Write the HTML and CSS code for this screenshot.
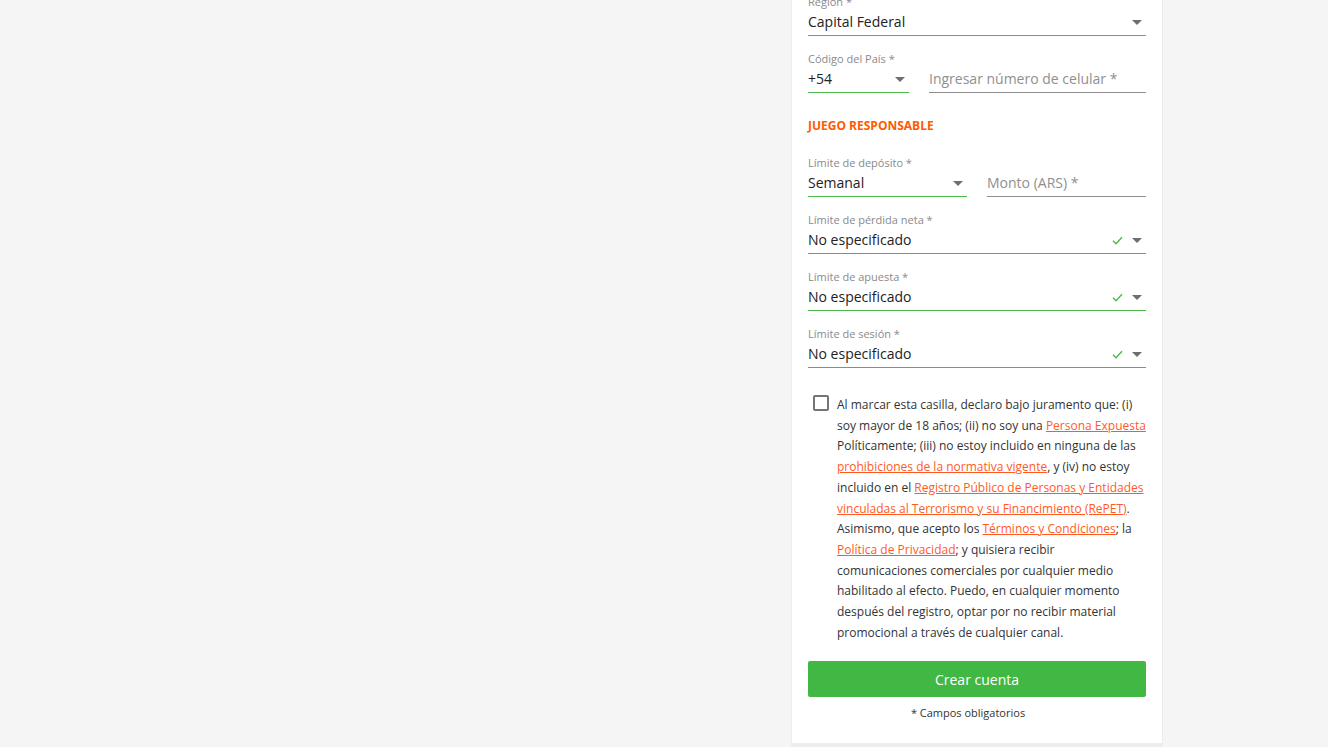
FILE: index.html
```html
<!DOCTYPE html>
<html lang="es">
<head>
<meta charset="utf-8">
<title>Registro</title>
<link rel="stylesheet" href="styles.css">
</head>
<body>
<div class="page">
  <div class="card">
    <div class="field">
      <div class="label">Región *</div>
      <div class="input filled">
        <span class="value">Capital Federal</span>
        <span class="icons"><svg class="arrow" width="10" height="5" viewBox="0 0 10 5"><path d="M0 0h10L5 5z"/></svg></span>
      </div>
    </div>

    <div class="row row-phone">
      <div class="field code">
        <div class="label">Código del País *</div>
        <div class="input filled">
          <span class="value">+54</span>
          <span class="icons"><svg class="arrow" width="10" height="5" viewBox="0 0 10 5"><path d="M0 0h10L5 5z"/></svg></span>
        </div>
      </div>
      <div class="field grow">
        <div class="label"></div>
        <div class="input empty">
          <span class="placeholder">Ingresar número de celular *</span>
        </div>
      </div>
    </div>

    <h3 class="section">JUEGO RESPONSABLE</h3>

    <div class="row row-half">
      <div class="field">
        <div class="label">Límite de depósito *</div>
        <div class="input filled">
          <span class="value">Semanal</span>
          <span class="icons"><svg class="arrow" width="10" height="5" viewBox="0 0 10 5"><path d="M0 0h10L5 5z"/></svg></span>
        </div>
      </div>
      <div class="field">
        <div class="label"></div>
        <div class="input empty">
          <span class="placeholder">Monto (ARS) *</span>
        </div>
      </div>
    </div>

    <div class="field">
      <div class="label">Límite de pérdida neta *</div>
      <div class="input filled">
        <span class="value">No especificado</span>
        <span class="icons"><svg class="check" width="11" height="9" viewBox="0 0 11 9"><path d="M1 4.8l3 3L10 1.2"/></svg><svg class="arrow" width="10" height="5" viewBox="0 0 10 5"><path d="M0 0h10L5 5z"/></svg></span>
      </div>
    </div>

    <div class="field">
      <div class="label">Límite de apuesta *</div>
      <div class="input filled">
        <span class="value">No especificado</span>
        <span class="icons"><svg class="check" width="11" height="9" viewBox="0 0 11 9"><path d="M1 4.8l3 3L10 1.2"/></svg><svg class="arrow" width="10" height="5" viewBox="0 0 10 5"><path d="M0 0h10L5 5z"/></svg></span>
      </div>
    </div>

    <div class="field">
      <div class="label">Límite de sesión *</div>
      <div class="input filled">
        <span class="value">No especificado</span>
        <span class="icons"><svg class="check" width="11" height="9" viewBox="0 0 11 9"><path d="M1 4.8l3 3L10 1.2"/></svg><svg class="arrow" width="10" height="5" viewBox="0 0 10 5"><path d="M0 0h10L5 5z"/></svg></span>
      </div>
    </div>

    <div class="consent">
      <span class="box"></span>
      <p class="terms">Al marcar esta casilla, declaro bajo juramento que: (i)<br>soy mayor de 18 años; (ii) no soy una <a href="#">Persona Expuesta</a><br>Políticamente; (iii) no estoy incluido en ninguna de las<br><a href="#">prohibiciones de la normativa vigente</a>, y (iv) no estoy<br>incluido en el <a href="#">Registro Público de Personas y Entidades <br>vinculadas al Terrorismo y su Financimiento (RePET)</a>.<br>Asimismo, que acepto los <a href="#">Términos y Condiciones</a>; la<br><a href="#">Política de Privacidad</a>; y quisiera recibir<br>comunicaciones comerciales por cualquier medio<br>habilitado al efecto. Puedo, en cualquier momento<br>después del registro, optar por no recibir material<br>promocional a través de cualquier canal.</p>
    </div>

    <button class="submit" type="button">Crear cuenta</button>
    <div class="required">* Campos obligatorios</div>
  </div>
</div>
</body>
</html>
```

FILE: styles.css
```css
html, body {
  margin: 0;
  padding: 0;
}
body {
  background: #f5f5f5;
  font-family: "Open Sans", "Noto Sans", sans-serif;
  color: #222;
  height: 747px;
  overflow: hidden;
}
.page {
  display: flex;
  padding-left: 791px;
}
.card {
  width: 338px;
  background: #fff;
  padding: 0 16px;
  margin-top: -7px;
  height: 750px;
  border-left: 1px solid #ececec;
  border-right: 1px solid #ececec;
  border-bottom: 4px solid #ededed;
  box-sizing: content-box;
  display: flex;
  flex-direction: column;
}
.field {
  display: flex;
  flex-direction: column;
  margin-bottom: 14px;
}
.label {
  height: 16px;
  line-height: 16px;
  font-size: 11px;
  color: #8a8a8a;
  position: relative;
  top: 1px;
}
.input {
  height: 26px;
  display: flex;
  align-items: center;
  border-bottom: 1px solid #4cb84c;
  font-size: 14px;
  line-height: 24px;
}
.input.empty {
  border-bottom-color: #8c8c8c;
}
.value {
  flex: 1;
  color: #222;
}
.placeholder {
  flex: 1;
  color: #8f8f8f;
}
.icons {
  display: flex;
  align-items: center;
  gap: 9px;
  padding-right: 4px;
}
.arrow path {
  fill: #6e6e6e;
}
.check path {
  fill: none;
  stroke: #4cb84c;
  stroke-width: 1.4;
}
.row {
  display: flex;
  gap: 20px;
}
.row-phone .code {
  width: 101px;
}
.row-phone .grow {
  flex: 1;
}
.row-half .field {
  flex: 1;
}
.section {
  margin: 11px 0 20px;
  font-size: 12px;
  line-height: 16px;
  font-weight: 700;
  color: #ff5a00;
}
.consent {
  display: flex;
  align-items: flex-start;
  margin-top: 13px;
  padding-left: 5px;
}
.box {
  flex: none;
  width: 12px;
  height: 12px;
  border: 2px solid #757575;
  border-radius: 2px;
  margin-right: 8px;
}
.terms {
  margin: 0;
  font-size: 12px;
  line-height: 20.7px;
  white-space: nowrap;
  color: #333;
}
.terms a {
  color: #ff5a1f;
  text-decoration: underline;
}
.submit {
  margin-top: 18px;
  height: 36px;
  border: none;
  border-radius: 2px;
  background: #41b843;
  color: #fff;
  font-family: "Open Sans", "Noto Sans", sans-serif;
  font-size: 14px;
}
.required {
  text-align: center;
  font-size: 11px;
  line-height: 16px;
  margin-top: 8px;
  padding-right: 18px;
  color: #333;
}
```
